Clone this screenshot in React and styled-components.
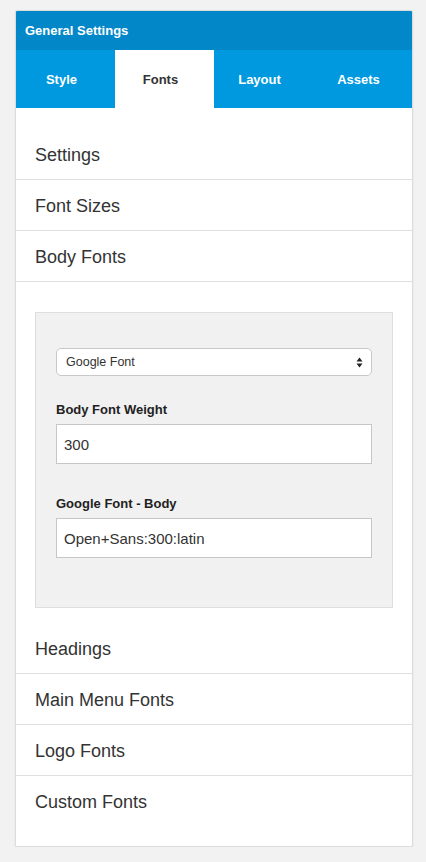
import React from "react";
import styled, { createGlobalStyle } from "styled-components";

const GlobalStyle = createGlobalStyle`
  body {
    margin: 0;
    background: #f2f2f2;
    font-family: "Liberation Sans", Arial, sans-serif;
    color: #333;
  }
`;

const Card = styled.div`
  box-sizing: border-box;
  width: 398px;
  margin: 10px 0 0 15px;
  background: #fff;
  border: 1px solid #dcdcdc;
  border-radius: 2px;
  box-shadow: 0 1px 2px rgba(0, 0, 0, 0.08);
  overflow: hidden;
`;

const Header = styled.div`
  height: 39px;
  display: flex;
  align-items: center;
  padding-left: 9px;
  background: #0288c8;
  color: #fff;
  font-size: 13px;
  font-weight: bold;
`;

const Tabs = styled.div`
  display: flex;
  height: 58px;
  background: #0099e0;
`;

const Tab = styled.div`
  flex: 1;
  display: flex;
  align-items: center;
  justify-content: center;
  padding-right: 8px;
  font-size: 13px;
  font-weight: bold;
  color: ${(p) => (p.active ? "#333" : "#fff")};
  background: ${(p) => (p.active ? "#fff" : "transparent")};
`;

const Panel = styled.div`
  padding: 21px 0 20px;
`;

const Item = styled.div`
  box-sizing: border-box;
  height: ${(p) => (p.last ? 50 : 51)}px;
  display: flex;
  align-items: center;
  padding: 3px 0 0 19px;
  font-size: 18px;
  color: #333;
  border-bottom: ${(p) => (p.last ? "none" : "1px solid #e0e0e0")};
`;

const Expanded = styled.div`
  padding: 30px 19px 15px;
`;

const GrayBox = styled.div`
  background: #f1f1f1;
  border: 1px solid #dedede;
  padding: 35px 20px 49px;
`;

const Select = styled.div`
  box-sizing: border-box;
  height: 28px;
  display: flex;
  align-items: center;
  justify-content: space-between;
  padding: 0 8px 0 9px;
  background: #fff;
  border: 1px solid #c9c9c9;
  border-radius: 5px;
  font-size: 12.5px;
  color: #333;
`;

const Field = styled.div`
  margin-top: ${(p) => p.top}px;
`;

const Label = styled.div`
  font-size: 13px;
  line-height: 16px;
  font-weight: bold;
  color: #222;
  margin-bottom: 6px;
`;

const Input = styled.div`
  box-sizing: border-box;
  height: 40px;
  display: flex;
  align-items: center;
  padding-left: 7px;
  background: #fff;
  border: 1px solid #c6c6c6;
  font-size: 15px;
  color: #333;
`;

const Arrows = () => (
  <svg width="7" height="11" viewBox="0 0 7 11">
    <path d="M3.5 0.5 L6.5 4.5 L0.5 4.5 Z" fill="#222" />
    <path d="M3.5 10.5 L6.5 6.5 L0.5 6.5 Z" fill="#222" />
  </svg>
);

export default function App() {
  return (
    <>
      <GlobalStyle />
      <Card>
        <Header>General Settings</Header>
        <Tabs>
          <Tab>Style</Tab>
          <Tab active>Fonts</Tab>
          <Tab>Layout</Tab>
          <Tab>Assets</Tab>
        </Tabs>
        <Panel>
          <Item>Settings</Item>
          <Item>Font Sizes</Item>
          <Item>Body Fonts</Item>
          <Expanded>
            <GrayBox>
              <Select>
                Google Font
                <Arrows />
              </Select>
              <Field top={26}>
                <Label>Body Font Weight</Label>
                <Input>300</Input>
              </Field>
              <Field top={32}>
                <Label>Google Font - Body</Label>
                <Input>Open+Sans:300:latin</Input>
              </Field>
            </GrayBox>
          </Expanded>
          <Item>Headings</Item>
          <Item>Main Menu Fonts</Item>
          <Item>Logo Fonts</Item>
          <Item last>Custom Fonts</Item>
        </Panel>
      </Card>
    </>
  );
}
